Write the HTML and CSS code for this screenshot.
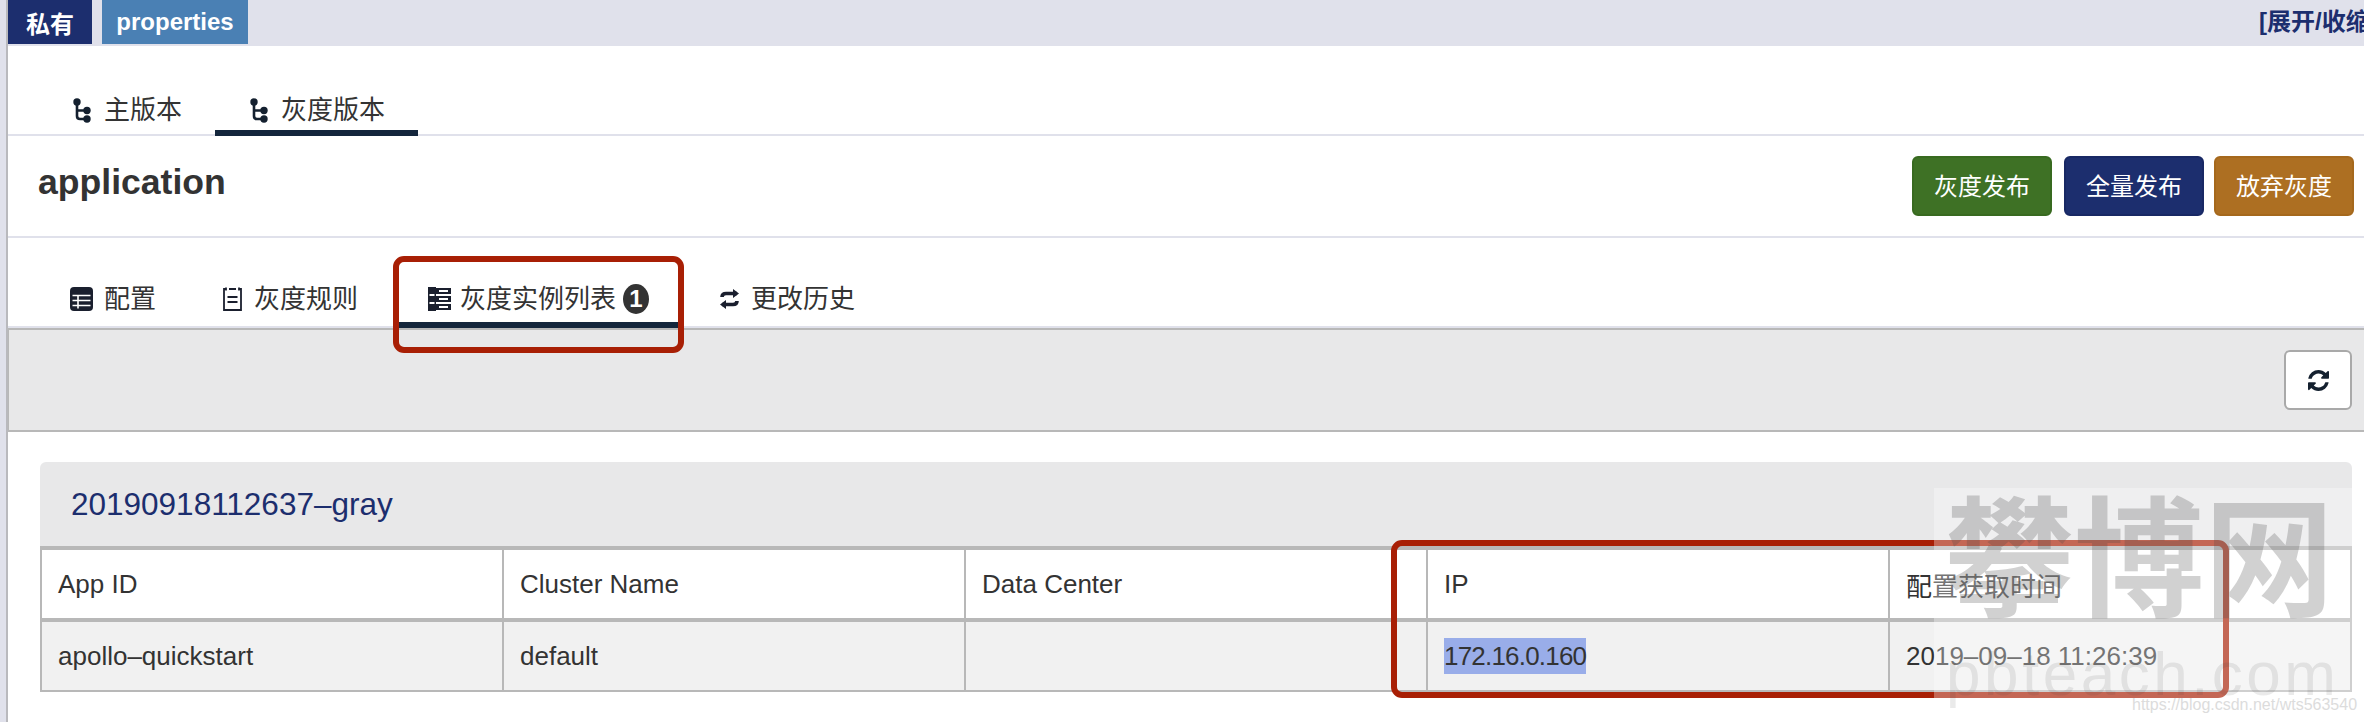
FILE: index.html
```html
<!DOCTYPE html>
<html lang="zh-CN">
<head>
<meta charset="utf-8">
<title>application</title>
<link rel="stylesheet" href="styles.css">
</head>
<body>
<div class="page">
  <main class="main">
    <header class="topbar">
      <span class="label label-navy">私有</span>
      <span class="label label-blue">properties</span>
      <a class="toggle">[展开/收缩]</a>
    </header>

    <nav class="versions">
      <a class="vtab">
        <svg class="ic-branch" viewBox="0 0 18 25"><g fill="none" stroke="currentColor" stroke-width="2.6"><path d="M4 4v14q0 3 3 3h7M4 12.5h10"/></g><g fill="currentColor"><circle cx="4" cy="4" r="3.7"/><circle cx="14" cy="12.5" r="3.7"/><circle cx="14" cy="21" r="3.7"/></g></svg>
        主版本
      </a>
      <a class="vtab is-active">
        <svg class="ic-branch" viewBox="0 0 18 25"><g fill="none" stroke="currentColor" stroke-width="2.6"><path d="M4 4v14q0 3 3 3h7M4 12.5h10"/></g><g fill="currentColor"><circle cx="4" cy="4" r="3.7"/><circle cx="14" cy="12.5" r="3.7"/><circle cx="14" cy="21" r="3.7"/></g></svg>
        灰度版本
      </a>
    </nav>

    <section class="title-row">
      <h1 class="title">application</h1>
      <div class="actions">
        <button class="btn btn-green">灰度发布</button>
        <button class="btn btn-navy">全量发布</button>
        <button class="btn btn-amber">放弃灰度</button>
      </div>
    </section>

    <nav class="subtabs">
      <a class="stab stab-first">
        <svg class="ic ic-23" viewBox="0 0 23 24"><rect width="23" height="24" rx="4" fill="currentColor"/><path d="M2.5 8.5h18M2.500 13.500h18M2.500 18.500h18M8 8.500v13" stroke="#fff" stroke-width="1.6" fill="none"/></svg>
        配置
      </a>
      <a class="stab stab-second">
        <svg class="ic ic-21" viewBox="0 0 21 24"><path d="M4 2H2v21h17V2h-2M4 .5v3M7 2h7M17 .5v3" fill="none" stroke="currentColor" stroke-width="1.8"/><path d="M5.500 10h10M5.500 15h10" stroke="currentColor" stroke-width="2.2"/></svg>
        灰度规则
      </a>
      <a class="stab stab-third is-active">
        <svg class="ic ic-23" viewBox="0 0 23 24"><path d="M0 0h8v24H0zM8 1h15v6H8zM8 9h15v6H8zM8 17h15v6H8z" fill="currentColor"/><path d="M11 4h9M11 12h9M11 20h9M1.500 8h5M1.500 16h5" stroke="#fff" stroke-width="2"/></svg>
        <span>灰度实例列表</span>
        <span class="badge">1</span>
      </a>
      <a class="stab">
        <svg class="ic ic-21" viewBox="0 0 21 20"><path d="M18 4.500H7Q3 4.500 3 8M3 15.500h11q4 0 4-3.500" fill="none" stroke="currentColor" stroke-width="3.6"/><path d="M14 0l6 4.500-6 4.500zM7 11l-6 4.500 6 4.500z" fill="currentColor"/></svg>
        更改历史
      </a>
    </nav>

    <section class="panel">
      <div class="toolbar">
        <button class="refresh">
          <svg viewBox="128 128 1536 1536"><path fill="currentColor" d="M1639 1056q0 5-1 7-64 268-268 434.5t-478 166.5q-146 0-282.5-55t-243.5-157l-129 129q-19 19-45 19t-45-19-19-45v-448q0-26 19-45t45-19h448q26 0 45 19t19 45-19 45l-137 137q71 66 161 102t187 36q134 0 250-65t186-179q11-17 53-117 8-23 30-23h192q13 0 22.5 9.5t9.5 22.5zm25-800v448q0 26-19 45t-45 19h-448q-26 0-45-19t-19-45 19-45l138-138q-148-137-349-137-134 0-250 65t-186 179q-11 17-53 117-8 23-30 23h-199q-13 0-22.5-9.5t-9.5-22.5v-7q65-268 270-434.5t480-166.5q146 0 284 55.5t245 156.5l130-129q19-19 45-19t45 19 19 45z"/></svg>
        </button>
      </div>
    </section>

    <section class="group">
      <h2 class="group-head">20190918112637–gray</h2>
      <table class="grid">
        <thead>
          <tr><th>App ID</th><th>Cluster Name</th><th>Data Center</th><th>IP</th><th>配置获取时间</th></tr>
        </thead>
        <tbody>
          <tr><td>apollo–quickstart</td><td>default</td><td></td><td><span class="selected">172.16.0.160</span></td><td>2019–09–18 11:26:39</td></tr>
        </tbody>
      </table>
    </section>
  </main>

  <div class="callout callout-tab"></div>
  <div class="callout callout-ip"></div>

  <div class="watermark">
    <span class="wm-cn">攀博网</span>
    <span class="wm-en">pbteach.com</span>
    <span class="wm-url">https://blog.csdn.net/wts563540</span>
  </div>
</div>
</body>
</html>
```

FILE: styles.css
```css
* { box-sizing: border-box; }
html, body { margin: 0; padding: 0; background: #fff; }
body {
  font-family: "Liberation Sans", "Noto Sans CJK SC", sans-serif;
  color: #333;
}
.page {
  position: relative;
  display: flex;
  width: 2364px;
  height: 722px;
  padding-left: 6px;
  overflow: hidden;
  background: #e0e1eb;
}
.main {
  flex: 1;
  min-width: 0;
  border-left: 2px solid #b9b9bd;
  background: #fff;
}

/* top bar */
.topbar {
  display: flex;
  align-items: flex-start;
  height: 46px;
  background: #e0e1eb;
}
.label {
  display: flex;
  align-items: center;
  justify-content: center;
  height: 44px;
  color: #fff;
  font-size: 24px;
  font-weight: 700;
}
.label-navy { width: 84px; background: #1c2e6e; }
.label-blue { width: 146px; margin-left: 10px; background: #4a80b4; }
.toggle {
  width: 105px;
  margin-left: auto;
  overflow: hidden;
  color: #1c2e6e;
  font-size: 24px;
  font-weight: 700;
  line-height: 44px;
  white-space: nowrap;
}

/* version tabs */
.versions {
  display: flex;
  padding: 38px 0 0 30px;
  height: 90px;
  border-bottom: 2px solid #e0e1eb;
}
.vtab {
  display: flex;
  align-items: center;
  gap: 13px;
  height: 52px;
  padding: 6px 33px 0 35px;
  border-bottom: 6px solid transparent;
  font-size: 26px;
  line-height: 34px;
}
.vtab.is-active { border-bottom-color: #14263c; }
.ic-branch { width: 18px; height: 25px; color: #14202f; flex: none; }

/* title row */
.title-row {
  display: flex;
  justify-content: space-between;
  height: 102px;
  padding: 20px 10px 0 30px;
  border-bottom: 2px solid #e0e1eb;
}
.title {
  margin: 3px 0 0;
  font-size: 35.600px;
  font-weight: 700;
  line-height: 46px;
}
.actions { display: flex; align-items: flex-start; }
.btn {
  width: 140px;
  height: 60px;
  padding: 0 0 4px;
  border: 2px solid;
  border-radius: 6px;
  color: #fff;
  font-family: inherit;
  font-size: 24px;
}
.btn-green { background: #3e7125; border-color: #386a20; }
.btn-navy { margin-left: 12px; background: #1c2e6e; border-color: #182864; }
.btn-amber { margin-left: 10px; background: #ad6f22; border-color: #a5681c; }

/* sub tabs */
.subtabs {
  display: flex;
  gap: 9px;
  height: 90px;
  padding: 44px 0 0 31px;
  border-bottom: 2px solid #e0e1eb;
}
.stab {
  display: flex;
  align-items: center;
  gap: 11px;
  height: 46px;
  padding: 0 30px 6px 31px;
  border-bottom: 6px solid transparent;
  font-size: 26px;
  line-height: 34px;
  white-space: nowrap;
}
.stab-first { padding-right: 26px; }
.stab-second { padding-right: 30px; }
.stab-third { gap: 9px; padding-right: 30px; }
.stab.is-active { border-bottom-color: #14263c; }
.ic { flex: none; color: #1a1f2e; }
.ic-23 { width: 23px; height: 24px; }
.ic-21 { width: 21px; height: 24px; }
.badge {
  display: flex;
  align-items: center;
  justify-content: center;
  width: 26px;
  height: 30px;
  margin-left: -2px;
  border-radius: 50%;
  background: #333;
  color: #fff;
  font-size: 24px;
  font-weight: 700;
}

/* toolbar panel */
.panel {
  border-top: 2px solid #b8b8b8;
  border-bottom: 2px solid #b8b8b8;
  border-left: 1px solid #b8b8b8;
  background: #e8e8e9;
}
.toolbar {
  display: flex;
  justify-content: flex-end;
  height: 100px;
  padding: 20px 12px 0 0;
}
.refresh {
  display: flex;
  align-items: center;
  justify-content: center;
  width: 68px;
  height: 60px;
  padding: 0;
  border: 2px solid #a9a9a9;
  border-radius: 6px;
  background: #fff;
  color: #14202f;
}
.refresh svg { width: 21px; height: 21px; }

/* group + table */
.group { margin: 30px 12px 0 32px; }
.group-head {
  margin: 0;
  height: 84px;
  padding-left: 31px;
  border-radius: 6px 6px 0 0;
  background: #e8e8e9;
  color: #1c2e6e;
  font-size: 31.500px;
  font-weight: 400;
  line-height: 84px;
}
.grid {
  width: 100%;
  border-collapse: separate;
  border-spacing: 0;
  table-layout: fixed;
  font-size: 26px;
}
.grid th, .grid td {
  padding: 0 0 0 16px;
  border-left: 2px solid #b8b8b8;
  font-weight: 400;
  text-align: left;
  white-space: nowrap;
}
.grid th { width: 462px; }
.grid th:last-child { width: auto; }
.grid th:last-child, .grid td:last-child { border-right: 2px solid #b8b8b8; }
.grid th {
  height: 76px;
  border-top: 4px solid #b8b8b8;
  border-bottom: 4px solid #b8b8b8;
  background: #fff;
}
.grid td {
  height: 70px;
  border-bottom: 2px solid #b8b8b8;
  background: #f1f1f1;
}
.selected {
  display: inline-block;
  background: #99ade9;
  letter-spacing: -0.8px;
  line-height: 36px;
  vertical-align: middle;
}

/* annotations drawn over the page */
.callout {
  position: absolute;
  border: 6px solid #a81f05;
  border-radius: 11px;
}
.callout-tab { left: 393px; top: 256px; width: 291px; height: 97px; }
.callout-ip { left: 1391px; top: 540px; width: 838px; height: 158px; }

.watermark {
  position: absolute;
  left: 1934px;
  top: 488px;
  right: 0;
  bottom: 0;
  background: rgba(255, 255, 255, 0.32);
}
.wm-cn {
  position: absolute;
  left: 10px;
  top: -22px;
  color: rgba(70, 70, 70, 0.25);
  font-size: 130px;
  font-weight: 700;
  line-height: 190px;
  white-space: nowrap;
}
.wm-en {
  position: absolute;
  left: 12px;
  top: 146px;
  color: rgba(60, 60, 60, 0.11);
  font-size: 62px;
  letter-spacing: 3.5px;
  line-height: 80px;
  white-space: nowrap;
}
.wm-url {
  position: absolute;
  left: 198px;
  top: 206px;
  color: #dcdcdc;
  font-size: 16px;
  line-height: 22px;
  white-space: nowrap;
}
```
